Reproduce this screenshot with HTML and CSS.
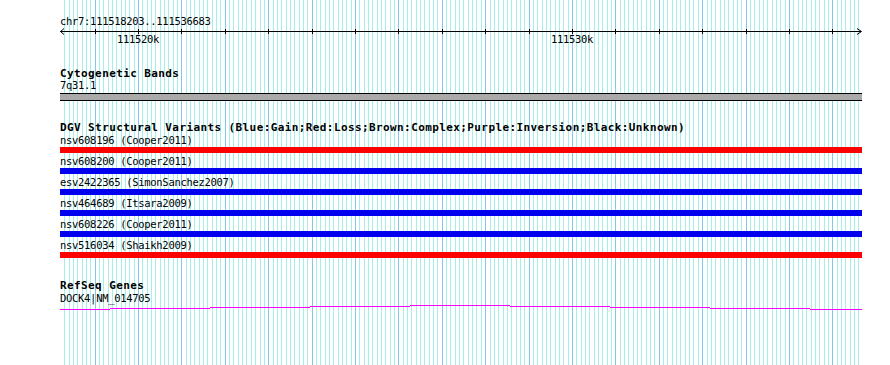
FILE: index.html
```html
<!DOCTYPE html>
<html>
<head>
<meta charset="utf-8">
<link rel="stylesheet" href="styles.css">
</head>
<body>
<div class="browser">
  <svg class="grid" id="grid" width="890" height="365"></svg>
  <div class="tracks">
    <div class="loc">chr7:111518203..111536683</div>
    <svg class="axis" id="axis" width="802" height="20">
      <line x1="0" y1="4.5" x2="801" y2="4.5" stroke="#000"/>
      <polyline points="4,1.5 0.5,4.5 4,7.5" fill="none" stroke="#000"/>
      <polyline points="797,1.5 801.5,4.5 797,7.5" fill="none" stroke="#000"/>
      <g id="ticks"></g>
      <text class="axlabel" x="78" y="16" text-anchor="middle">111520k</text>
      <text class="axlabel" x="512" y="16" text-anchor="middle">111530k</text>
    </svg>

    <div class="title first">Cytogenetic Bands</div>
    <div class="label band-label">7q31.1</div>
    <div class="band"></div>

    <div class="title">DGV Structural Variants (Blue:Gain;Red:Loss;Brown:Complex;Purple:Inversion;Black:Unknown)</div>
    <div class="variants">
      <div class="variant"><div class="label">nsv608196 (Cooper2011)</div><div class="bar loss"></div></div>
      <div class="variant"><div class="label">nsv608200 (Cooper2011)</div><div class="bar gain"></div></div>
      <div class="variant"><div class="label">esv2422365 (SimonSanchez2007)</div><div class="bar gain"></div></div>
      <div class="variant"><div class="label">nsv464689 (Itsara2009)</div><div class="bar gain"></div></div>
      <div class="variant"><div class="label">nsv608226 (Cooper2011)</div><div class="bar gain"></div></div>
      <div class="variant"><div class="label">nsv516034 (Shaikh2009)</div><div class="bar loss"></div></div>
    </div>

    <div class="title refseq">RefSeq Genes</div>
    <div class="label">DOCK4|NM_014705</div>
    <svg class="gene" width="802" height="8">
      <rect x="0" y="5" width="50" height="1"/>
      <rect x="50" y="4" width="100" height="1"/>
      <rect x="150" y="3" width="100" height="1"/>
      <rect x="250" y="2" width="100" height="1"/>
      <rect x="350" y="1" width="100" height="1"/>
      <rect x="450" y="2" width="100" height="1"/>
      <rect x="550" y="3" width="100" height="1"/>
      <rect x="650" y="4" width="100" height="1"/>
      <rect x="750" y="5" width="52" height="1"/>
    </svg>
  </div>
</div>
<script src="script.js"></script>
</body>
</html>
```

FILE: styles.css
```css
html, body {
  margin: 0;
  padding: 0;
  background: #ffffff;
}
.browser {
  position: relative;
  width: 890px;
  height: 365px;
  overflow: hidden;
  background: #ffffff;
}
.grid {
  position: absolute;
  left: 0;
  top: 0;
  z-index: 0;
}
.tracks {
  position: relative;
  z-index: 1;
  padding-left: 60px;
  width: 802px;
  display: flex;
  flex-direction: column;
  font-family: "DejaVu Sans Mono", "Liberation Mono", monospace;
  color: #000;
}
.loc, .label {
  font-size: 10.5px;
  letter-spacing: -0.3px;
  line-height: 12px;
  height: 12px;
  white-space: nowrap;
}
.loc {
  margin-top: 15px;
}
.axis {
  display: block;
  overflow: visible;
}
.axlabel {
  font-family: "DejaVu Sans Mono", "Liberation Mono", monospace;
  font-size: 10.5px;
  letter-spacing: -0.3px;
  fill: #000;
}
.title {
  font-size: 11px;
  font-weight: bold;
  letter-spacing: 0.4px;
  line-height: 12px;
  height: 12px;
  white-space: nowrap;
  margin-top: 21px;
}
.refseq {
  margin-top: 20px;
}
.band-label {
  margin-top: -1px;
}
.band {
  margin-top: 2px;
  height: 6px;
  background: #aaaaaa;
  border-top: 1px solid #000;
  border-bottom: 1px solid #000;
}
.variants {
  display: flex;
  flex-direction: column;
}
.variant {
  display: flex;
  flex-direction: column;
  margin-bottom: 2px;
}
.bar {
  margin-top: 1px;
  height: 6px;
}
.loss { background: #ff0000; }
.gain { background: #0000ee; }
.gene {
  display: block;
  fill: #ff00ff;
}
```

FILE: script.js
```js
(function () {
  var s = 111518203, e = 111536683, W = 802, k = W / (e - s);
  var NS = "http://www.w3.org/2000/svg";
  var grid = document.getElementById("grid");
  var ticks = document.getElementById("ticks");
  for (var bp = Math.ceil(s / 100) * 100; bp <= e; bp += 100) {
    var x = Math.round((bp - s) * k);
    var major = bp % 1000 === 0;
    var l = document.createElementNS(NS, "line");
    l.setAttribute("x1", 60 + x + 0.5);
    l.setAttribute("x2", 60 + x + 0.5);
    l.setAttribute("y1", 0);
    l.setAttribute("y2", 365);
    l.setAttribute("stroke", major ? "#86c6ee" : "#a6eeea");
    l.setAttribute("stroke-width", 1);
    grid.appendChild(l);
    if (major) {
      var t = document.createElementNS(NS, "line");
      t.setAttribute("x1", x + 0.5);
      t.setAttribute("x2", x + 0.5);
      t.setAttribute("y1", 2);
      t.setAttribute("y2", 7);
      t.setAttribute("stroke", "#000");
      ticks.appendChild(t);
    }
  }
})();
```
